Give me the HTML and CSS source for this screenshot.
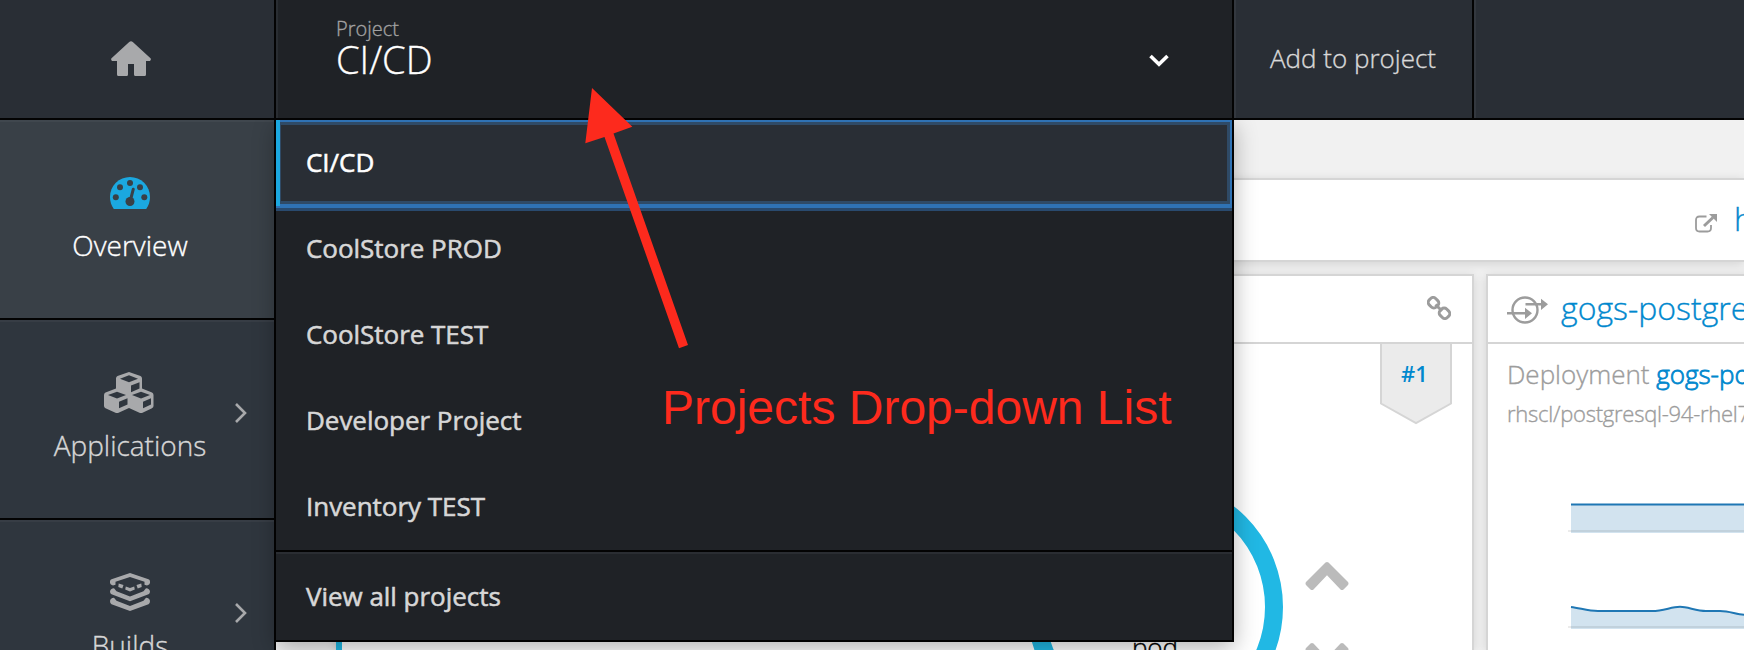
FILE: index.html
```
<!DOCTYPE html>
<html lang="en">
<head>
<meta charset="utf-8">
<title>Projects</title>
<link rel="stylesheet" href="styles.css">
</head>
<body>
<div class="app">
  <header class="topbar">
    <a class="home"><svg class="home-icon" width="40" height="35" viewBox="0 0 40 35"><path d="M18.2 1Q20 -.6 21.800 1L39.500 17.200Q40.500 18.600 39 20H35V33.500Q35 35 33.500 35H24.500Q23 35 23 33.500V23H17V33.500Q17 35 15.500 35H7.500Q6 35 6 33.500V20H1Q-.5 18.600.5 17.200Z"/></svg></a>
    <div class="project">
      <div class="project-text"><span class="project-label">Project</span><span class="project-name">CI/CD</span></div>
      <svg class="caret" width="20" height="14" viewBox="0 0 20 14"><path d="M1.500 2L10 10.300L18.500 2"/></svg>
    </div>
    <a class="add">Add to project</a>
    <div class="rest"></div>
  </header>
  <div class="body">
    <nav class="sidebar">
      <a class="nav active">
        <svg class="nav-icon" width="40" height="32" viewBox="0 0 40 32"><path class="blue" d="M3.800 32C1.300 28.500 0 24.500 0 20A20 20 0 0 1 40 20C40 24.500 38.700 28.500 36.200 32Z"/><g class="hole"><circle cx="5.800" cy="20.300" r="3"/><circle cx="10" cy="10.300" r="3"/><circle cx="20" cy="6" r="3"/><circle cx="30" cy="10.300" r="3"/><circle cx="34.300" cy="20.300" r="3"/><circle cx="20" cy="24.500" r="4.500"/></g><path class="needle" d="M20.500 23L23.300 12.200"/></svg>
        <span>Overview</span>
      </a>
      <a class="nav">
        <svg class="nav-icon cubes" width="50" height="41" viewBox="0 0 50 41"><path class="gray" d="M25 0L36.500 4Q38 4.800 38 6.500V16.500L48 20.500Q49.500 21.300 49.500 23V34Q49.500 35.500 48 36.300L38 41H36L25 36L14 41H12L1.500 36.300Q0 35.500 0 34V23Q0 21.300 1.500 20.500L12 16.500V6.500Q12 4.800 13.500 4Z"/><g class="cube-hole"><path d="M25 3.300L34 6.700L25 10.300L16 6.700Z"/><path d="M27 13.600L35.500 10.200V16.600L27 20.200Z"/><path d="M13 19.700L22 23L13 26.600L4 23Z"/><path d="M15 29.800L23.500 26.300V32.500L15 36.300Z"/><path d="M37 19.700L46 23L37 26.600L28 23Z"/><path d="M39 29.800L47 26.300V32.500L39 36.300Z"/></g></svg>
        <span>Applications</span>
        <svg class="arrow" width="14" height="22" viewBox="0 0 14 22"><path d="M2 2L11 11L2 20"/></svg>
      </a>
      <a class="nav">
        <svg class="nav-icon stack" width="40" height="38" viewBox="0 0 40 38"><path class="gray" d="M20 0L38.500 6.300Q40 6.900 40 8.500V10Q39.800 11.800 37 12.500L34.500 11.800V8.800L20 3.900L5.500 8.800V11.800L3 12.500Q.2 11.800 0 10V8.500Q0 6.900 1.500 6.300ZM8.700 10.400L13.500 12.100L12.300 15.500L8.300 14.100ZM31.300 10.400L26.500 12.100L27.700 15.500L31.700 14.100ZM15.800 13.500L20 14.900L24.200 13.500L24.800 16.600L20 18.500L15.200 16.600ZM0 18.500Q.3 15.500 4 15.200L6.500 18.200L20 23.500L33.500 18.200L36 15.200Q39.700 15.500 40 18.500Q40 20.700 38.500 21.300L20 28.200L1.500 21.300Q0 20.700 0 18.500ZM0 28Q.3 25 4 24.700L6.500 27.700L20 33L33.500 27.700L36 24.700Q39.700 25 40 28Q40 30.700 38.500 31.300L20 38L1.500 31.300Q0 30.700 0 28Z"/></svg>
        <span>Builds</span>
        <svg class="arrow" width="14" height="22" viewBox="0 0 14 22"><path d="M2 2L11 11L2 20"/></svg>
      </a>
    </nav>
    <main class="content">
      <div class="strip"></div>
      <section class="route">
        <svg width="22" height="19" viewBox="0 0 22 19"><path class="ext-box" d="M11.500 2.500H4.500Q1 2.500 1 6V14Q1 17.500 4.500 17.500H12.500Q16 17.500 16 14V11"/><path class="ext-arrow" d="M9 12L18 3.500"/><path class="ext-head" d="M14 0H22V8Z"/></svg>
        <span class="route-link">h</span>
      </section>
      <div class="cards">
        <section class="card first">
          <div class="card-head"><svg width="24" height="24" viewBox="0 0 24 24"><g class="chain"><rect x="1.500" y="2.200" width="10" height="9" rx="3.500" transform="rotate(45 6.500 6.700)"/><rect x="12.500" y="12.800" width="10" height="9" rx="3.500" transform="rotate(45 17.500 17.300)"/><path d="M8.500 8.500L15 15"/></g></svg></div>
          <div class="card-body first-body">
            <svg class="badge" width="72" height="82" viewBox="0 0 72 82"><path d="M1 -2V59.500L36 79L71 59.500V-2"/><text x="21" y="38">#1</text></svg>
            <div class="scale">
              <div class="donut"><span>pod</span></div>
              <div class="steppers"><svg width="44" height="28" viewBox="0 0 44 28"><path d="M20.500 .6Q22 -.4 23.500 .6L43 20Q44 21.500 43 23L38.500 27.400Q37 28.400 35.500 27.400L22 13.300L8.500 27.400Q7 28.400 5.500 27.400L1 23Q0 21.500 1 20Z"/></svg><svg width="44" height="28" viewBox="0 0 44 28"><path transform="matrix(1 0 0 -1 0 28)" d="M20.500 .6Q22 -.4 23.500 .6L43 20Q44 21.500 43 23L38.500 27.400Q37 28.400 35.500 27.400L22 13.300L8.500 27.400Q7 28.400 5.500 27.400L1 23Q0 21.500 1 20Z"/></svg></div>
            </div>
          </div>
        </section>
        <section class="card second">
          <div class="card-head"><svg width="42" height="28" viewBox="0 0 42 28"><g class="pipe"><circle cx="18" cy="14" r="12.500"/><path d="M0 17.300H19M18.500 8.300H35"/></g><path class="pipe-head" d="M18 11.700L25 17.300L18 22.900ZM34 2.700L41 8.300L34 13.900Z"/></svg><span class="title">gogs-postgresql</span></div>
          <div class="card-body">
            <p class="deploy">Deployment <b>gogs-postgresql</b></p>
            <p class="image">rhscl/postgresql-94-rhel7</p>
            <svg class="chart" width="176" height="130" viewBox="0 0 176 130"><path class="fill" d="M3 1.500H176V30H3Z"/><path class="line" d="M3 1.500H176"/><path class="axis" d="M0 28H176"/><path class="fill" d="M3 104C12 105 20 108 30 108H84C96 108 103 103.800 112 103.800C120 103.800 128 108 138 108H152C162 108 168 111.500 176 111.700V126H3Z"/><path class="line" d="M3 104C12 105 20 108 30 108H84C96 108 103 103.800 112 103.800C120 103.800 128 108 138 108H152C162 108 168 111.500 176 111.700"/><path class="axis" d="M0 124H176"/></svg>
          </div>
        </section>
      </div>
    </main>
  </div>
  <div class="dropdown">
    <div class="menu">
      <a class="item selected">CI/CD</a>
      <a class="item">CoolStore PROD</a>
      <a class="item">CoolStore TEST</a>
      <a class="item">Developer Project</a>
      <a class="item">Inventory TEST</a>
      <a class="item all">View all projects</a>
    </div>
  </div>
  <svg class="callout" width="110" height="262" viewBox="0 0 110 262"><path d="M12 0L52.300 38.700L33.500 45.500L108 257L99 260.300L24.500 49L5.300 55.300Z"/></svg>
  <div class="callout-text">Projects Drop-down List</div>
</div>
</body>
</html>
```
FILE: styles.css
```
* { box-sizing: border-box; }
body { margin: 0; background: #f1f1f1; font-family: "Open Sans", "Noto Sans", sans-serif; overflow: hidden; }
p { margin: 0; }
svg { display: block; flex: none; }
.app { position: relative; width: 1744px; height: 650px; overflow: hidden; display: flex; flex-direction: column; }
.topbar { display: flex; height: 120px; flex: none; background: #292e35; border-bottom: 2px solid #030303; -webkit-text-stroke: .35px; }
.home { width: 276px; border-right: 2px solid #030303; display: flex; align-items: center; justify-content: center; }
.home-icon { fill: #a8a9ab; margin-left: -12px; margin-top: -1px; }
.project { width: 958px; background: #1f2226; border-left: 2px solid #292d32; border-right: 2px solid #030303; display: flex; align-items: center; justify-content: space-between; padding: 0 63px 0 58px; }
.project-text { display: flex; flex-direction: column; padding-bottom: 20px; }
.project-label { font-size: 20px; font-weight: 300; line-height: 20px; color: #a1a1a1; }
.project-name { font-size: 38px; font-weight: 300; line-height: 40px; color: #fff; }
.caret { fill: none; stroke: #fff; stroke-width: 3.6; margin-top: 4px; }
.add { width: 240px; border-left: 2px solid #33383f; border-right: 2px solid #030303; color: #d9d9d9; font-size: 26px; font-weight: 300; display: flex; align-items: center; justify-content: center; padding: 0 2px 2px 0; }
.rest { flex: 1; border-left: 2px solid #33383f; }
.body { display: flex; flex: 1; min-height: 0; }
.sidebar { width: 276px; flex: none; border-right: 2px solid #030303; background: #2f363e; }
.nav { position: relative; height: 200px; border-bottom: 2px solid #030303; border-top: 2px solid #373d45; display: flex; flex-direction: column; align-items: center; padding: 55px 14px 0 0; color: #d7d7d7; font-size: 28px; font-weight: 300; line-height: 38px; -webkit-text-stroke: .35px; }
.nav.active { background: #394047; border-top-color: #40474e; color: #fff; }
.nav span { margin-top: auto; margin-bottom: 54px; }
.cubes { margin-top: -5px; margin-left: -3px; }
.stack { margin-top: -4px; }
.blue { fill: #1ba8e0; }
.hole { fill: #394047; }
.needle { stroke: #394047; stroke-width: 3; stroke-linecap: round; }
.gray { fill: #a8a9ab; }
.cube-hole { fill: #2f363e; }
.arrow { position: absolute; left: 234px; top: 80px; fill: none; stroke: #a8a9ab; stroke-width: 2.6; }
.content { flex: 1; min-width: 0; display: flex; flex-direction: column; }
.strip { height: 58px; flex: none; }
.route { height: 84px; flex: none; background: #fff; border-top: 2px solid #d5d5d5; border-bottom: 2px solid #d5d5d5; box-shadow: 0 2px 10px rgba(0,0,0,.13); display: flex; align-items: center; padding-left: 1419px; color: #0088ce; font-size: 32px; font-weight: 300; white-space: nowrap; -webkit-text-stroke: .35px; }
.route svg { margin-top: 6px; }
.route-link { margin-left: 17px; margin-top: -4px; }
.ext-box { fill: none; stroke: #9c9c9c; stroke-width: 1.8; }
.ext-arrow { stroke: #9c9c9c; stroke-width: 3; }
.ext-head { fill: #9c9c9c; }
.cards { display: flex; margin-top: 12px; flex: 1; min-height: 0; padding-left: 60px; gap: 12px; }
.card { background: #fff; border: 2px solid #d5d5d5; border-bottom: 0; box-shadow: 0 2px 10px rgba(0,0,0,.13); flex: none; }
.first { width: 1138px; border-left: 6px solid #21b8e4; }
.second { width: 700px; -webkit-text-stroke: .35px; }
.card-head { height: 68px; border-bottom: 2px solid #d5d5d5; display: flex; align-items: center; }
.first .card-head { justify-content: flex-end; padding-right: 21px; padding-bottom: 2px; }
.second .card-head { padding: 0 0 0 19px; color: #0088ce; font-size: 32px; font-weight: 300; }
.second .card-head svg { margin-top: 2px; }
.title { margin-left: 12px; margin-top: -4px; }
.chain { fill: none; stroke: #9c9c9c; stroke-width: 3; }
.first-body { display: flex; flex-direction: column; align-items: flex-end; }
.badge { margin-right: 20px; }
.badge path { fill: #ebebeb; stroke: #d5d5d5; stroke-width: 2; }
.badge text { fill: #0088ce; font-size: 22px; font-weight: 600; }
.scale { display: flex; gap: 22px; margin: 53px 123px 0 0; }
.donut { width: 256px; height: 256px; flex: none; border: 18px solid #21b8e4; border-radius: 50%; display: flex; align-items: center; justify-content: center; font-size: 26px; font-weight: 300; line-height: 30px; padding-top: 80px; color: #000; -webkit-text-stroke: .4px; }
.steppers { display: flex; flex-direction: column; gap: 53px; padding-top: 83px; fill: #bbb; }
.pipe { fill: none; stroke: #9c9c9c; stroke-width: 2.4; }
.pipe-head { fill: #9c9c9c; }
.second .card-body { padding: 11px 0 0 19px; color: #9c9c9c; white-space: nowrap; }
.deploy { font-size: 26px; line-height: 38px; font-weight: 300; }
.deploy b { font-weight: 300; color: #0088ce; -webkit-text-stroke: .8px; }
.image { font-size: 22px; line-height: 40px; font-weight: 300; letter-spacing: -.25px; }
.chart { margin: 70px 0 0 61px; }
.fill { fill: #d2e3ef; }
.line { fill: none; stroke: #1f77b4; stroke-width: 2; }
.axis { stroke: #000; stroke-opacity: .08; stroke-width: 2; }
.dropdown { position: absolute; left: 276px; top: 120px; width: 958px; height: 522px; background: #1f2226; border-right: 2px solid #030303; border-bottom: 2px solid #030303; clip-path: inset(0 -40px -40px -40px); box-shadow: 0 6px 22px rgba(0,0,0,.3); }
.menu { overflow: hidden; height: 520px; display: flex; flex-direction: column; }
.item { height: 86px; flex: none; display: flex; align-items: center; padding: 0 0 2px 30px; color: #d7d7d7; font-size: 26px; font-weight: 400; letter-spacing: -.03px; -webkit-text-stroke: .55px; }
.selected { position: relative; z-index: 1; background: #292e35; color: #fff; }
.selected::before { content: ""; position: absolute; z-index: 2; left: 0; top: 0; width: 4px; height: 86px; background: #1ba8e0; }
.selected::after { content: ""; position: absolute; left: -2px; right: -2px; top: -2px; bottom: -2px; border: 4px solid #2f72b4; box-shadow: 0 0 0 3px #294a6e, inset 0 0 0 3px #2f4a66; border-radius: 2px; }
.all { height: 90px; border-top: 2px solid #030303; box-shadow: inset 0 2px #2a2d32; padding-bottom: 1px; }
.callout { position: absolute; left: 580px; top: 88px; fill: #fd2a1d; }
.callout-text { position: absolute; left: 662px; top: 380px; font: 48px/55px "Liberation Sans", Arial, sans-serif; color: #fd2a1d; white-space: nowrap; }
```
